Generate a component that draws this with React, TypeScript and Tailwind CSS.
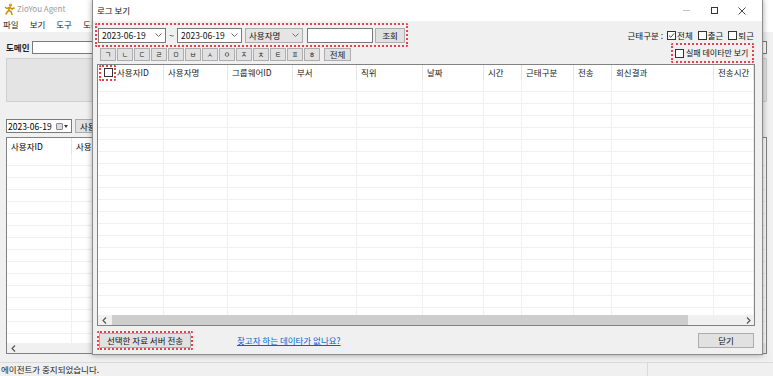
import type { ReactNode } from 'react'

const consonants = ['ㄱ', 'ㄴ', 'ㄷ', 'ㄹ', 'ㅁ', 'ㅂ', 'ㅅ', 'ㅇ', 'ㅈ', 'ㅊ', 'ㅌ', 'ㅍ', 'ㅎ']

const columns = [
  { label: '사용자명', w: 'w-[64px]' },
  { label: '그룹웨어ID', w: 'w-[65px]' },
  { label: '부서', w: 'w-[64px]' },
  { label: '직위', w: 'w-[66px]' },
  { label: '날짜', w: 'w-[61px]' },
  { label: '시간', w: 'w-[38px]' },
  { label: '근태구분', w: 'w-[52px]' },
  { label: '전송', w: 'w-[38px]' },
  { label: '회신결과', w: 'w-[102px]' },
  { label: '전송시간', w: 'w-[40px]' },
]

const rows = Array.from({ length: 20 }, (_, i) => i)

function Chevron() {
  return (
    <svg width="7" height="4" viewBox="0 0 7 4">
      <path d="M0.5 0.5L3.5 3.5L6.5 0.5" stroke="#606060" fill="none" strokeWidth="0.9" />
    </svg>
  )
}

function Combo({ text, className }: { text: string; className: string }) {
  return (
    <div className={`flex h-[15px] items-center justify-between border pl-[3px] pr-[3px] ${className}`}>
      <span className="leading-none">{text}</span>
      <Chevron />
    </div>
  )
}

function Box({ checked }: { checked?: boolean }) {
  return (
    <span className="flex h-[9px] w-[9px] shrink-0 items-center justify-center border border-[#333] bg-white">
      {checked && (
        <svg width="7" height="7" viewBox="0 0 7 7">
          <path d="M1 3.6L2.8 5.3L6 1.5" stroke="#333" fill="none" strokeWidth="0.9" />
        </svg>
      )}
    </span>
  )
}

function Btn({ children, className }: { children: ReactNode; className: string }) {
  return (
    <div className={`flex items-center justify-center border border-[#adadad] bg-[#e1e1e1] leading-none ${className}`}>
      {children}
    </div>
  )
}

function Arrow({ dir }: { dir: 'left' | 'right' }) {
  return (
    <svg width="5" height="7" viewBox="0 0 5 7">
      <path
        d={dir === 'left' ? 'M4 0.5L1 3.5L4 6.5' : 'M1 0.5L4 3.5L1 6.5'}
        stroke="#505050"
        fill="none"
        strokeWidth="1.1"
      />
    </svg>
  )
}

function AgentIcon() {
  return (
    <svg width="11" height="12" viewBox="0 0 11 12">
      <circle cx="6.5" cy="2" r="1.6" fill="#d9a000" />
      <path
        d="M6 4L4.5 7.5L2 11M4.5 7.5L7 8.5L8 11.5M5.5 4.5L3 5.5L1.5 4.5M6 4.5L8 6L10 5"
        stroke="#c88f00"
        strokeWidth="1.5"
        fill="none"
        strokeLinecap="round"
      />
    </svg>
  )
}

function BackgroundApp() {
  return (
    <div className="flex h-[376px] w-[773px] flex-col bg-[#f0f0f0]">
      <div className="flex h-[17px] items-center gap-[2px] bg-white pl-[4px] text-[8px] text-[#9a9a9a]">
        <AgentIcon />
        <span>ZioYou Agent</span>
      </div>
      <div className="flex h-[15px] items-center gap-[11px] bg-white pl-[3px] text-[8.5px] text-[#222]">
        <span>파일</span>
        <span>보기</span>
        <span>도구</span>
        <span>도움말</span>
      </div>
      <div className="flex flex-1 flex-col px-[6px]">
        <div className="mt-[9px] flex h-[13px] items-center">
          <span className="w-[26px] text-[8.5px] font-bold text-[#222]">도메인</span>
          <div className="h-[13px] flex-1 border border-[#7a7a7a] bg-white" />
        </div>
        <div className="mt-[4px] h-[44px] border border-[#cfcfcf] bg-[#e4e4e4]" />
        <div className="mt-[17px] flex h-[14px] items-center gap-[3px]">
          <div className="flex h-[14px] w-[66px] items-center justify-between border border-[#7a7a7a] bg-white pl-[1px] pr-[3px] text-[8.5px]">
            <span className="leading-none">2023-06-19</span>
            <span className="flex items-center gap-[1px]">
              <span className="h-[7px] w-[7px] rounded-[1px] border border-[#8a8a8a] bg-[#dcdcdc]" />
              <svg width="4" height="3" viewBox="0 0 4 3">
                <path d="M0 0H4L2 3Z" fill="#3a3a3a" />
              </svg>
            </span>
          </div>
          <Btn className="h-[14px] w-[40px] justify-start pl-[4px] text-[8.5px]">사용자</Btn>
        </div>
        <div className="mt-[4px] flex h-[217px] flex-col overflow-hidden border border-[#828282] bg-white">
          <div className="flex h-[16px] shrink-0 text-[8.5px]">
            <div className="flex w-[65px] items-center border-r border-[#e5e5e5] pl-[4px]">사용자ID</div>
            <div className="flex items-center pl-[4px]">사용자명</div>
          </div>
          <div className="flex-1 overflow-hidden">
            {rows.map((r) => (
              <div key={r} className="flex h-[12px] border-b border-[#f0f0f0]">
                <div className="w-[65px] border-r border-[#f0f0f0]" />
              </div>
            ))}
          </div>
          <div className="flex h-[10px] shrink-0 items-center bg-[#f0f0f0] pl-[4px]">
            <Arrow dir="left" />
          </div>
        </div>
      </div>
      <div className="mt-[5px] flex h-[14px] items-center border-t border-[#dadada] text-[8.5px] text-[#222]">
        <span className="w-[648px] border-r border-[#dadada] pl-[1px]">에이전트가 중지되었습니다.</span>
      </div>
    </div>
  )
}

function LogDialog() {
  return (
    <div className="absolute left-[92px] top-[-1px] flex h-[356px] w-[671px] flex-col border border-[#8c8c8c] bg-[#f0f0f0] text-[8.5px] shadow-[0_0_6px_rgba(0,0,0,0.35)]">
      <div className="flex h-[21px] shrink-0 items-center justify-between bg-white">
        <span className="pl-[4px] text-[#111]">로그 보기</span>
        <div className="flex h-full items-center">
          <div className="flex w-[28px] items-center justify-center">
            <span className="h-px w-[7px] bg-[#c4c4c4]" />
          </div>
          <div className="flex w-[28px] items-center justify-center">
            <span className="h-[7px] w-[7px] border border-[#333]" />
          </div>
          <div className="mr-[6px] flex w-[28px] items-center justify-center">
            <svg width="8" height="8" viewBox="0 0 8 8">
              <path d="M0.5 0.5L7.5 7.5M7.5 0.5L0.5 7.5" stroke="#333" strokeWidth="0.9" />
            </svg>
          </div>
        </div>
      </div>

      <div className="flex h-[43px] shrink-0 justify-between">
        <div className="flex flex-col">
          <div className="ml-[2px] mt-[2px] flex h-[24px] w-[313px] items-center rounded-[2px] border-2 border-dotted border-[#e8404f] pl-[1px] text-[#111]">
            <Combo text="2023-06-19" className="w-[68px] border-[#7a7a7a] bg-white" />
            <span className="w-[11px] text-center leading-none">~</span>
            <Combo text="2023-06-19" className="w-[65px] border-[#7a7a7a] bg-white" />
            <Combo text="사용자명" className="ml-[3px] w-[58px] border-[#adadad] bg-[#e5e5e5]" />
            <div className="ml-[4px] h-[15px] w-[66px] border border-[#7a7a7a] bg-white" />
            <Btn className="ml-[2px] h-[15px] w-[30px]">조회</Btn>
          </div>
          <div className="ml-[7px] mt-[1px] flex h-[13px] items-center gap-[1px] text-[7px] text-[#222]">
            {consonants.map((c) => (
              <Btn key={c} className="h-[13px] w-[16px]">
                {c}
              </Btn>
            ))}
            <Btn className="ml-[3px] h-[13px] w-[27px] text-[8.5px]">전체</Btn>
          </div>
        </div>
        <div className="mr-[8px] flex w-[130px] flex-col items-end text-[#111]">
          <div className="mt-[9px] flex h-[10px] items-center whitespace-nowrap">
            <span className="mr-[4px]">근태구분 :</span>
            <Box checked />
            <span className="ml-[1px] mr-[5px]">전체</span>
            <Box />
            <span className="ml-[1px] mr-[5px]">출근</span>
            <Box />
            <span className="ml-[1px]">퇴근</span>
          </div>
          <div className="mt-[3px] flex h-[20px] w-[83px] items-center gap-[2px] overflow-hidden rounded-[2px] border-2 border-dotted border-[#e8404f] pl-[2px] text-[8px]">
            <Box />
            <span className="whitespace-nowrap">실패 데이타만 보기</span>
          </div>
        </div>
      </div>

      <div className="ml-[4px] mr-[7px] flex h-[262px] shrink-0 flex-col overflow-hidden border border-[#828282] bg-white text-[#222]">
        <div className="flex h-[15px] shrink-0">
          <div className="relative flex w-[66px] items-center border-r border-[#e5e5e5] pl-[6px]">
            <Box />
            <span className="ml-[4px]">사용자ID</span>
            <span className="absolute left-[1px] top-0 h-[16px] w-[17px] rounded-[2px] border-2 border-dotted border-[#e8404f]" />
          </div>
          {columns.map((c) => (
            <div key={c.label} className={`flex items-center whitespace-nowrap border-r border-[#e5e5e5] pl-[4px] ${c.w}`}>
              {c.label}
            </div>
          ))}
        </div>
        <div className="flex-1 overflow-hidden">
          {rows.map((r) => (
            <div key={r} className="flex h-[12px] border-b border-[#f0f0f0]">
              <div className="w-[66px] border-r border-[#f0f0f0]" />
              {columns.map((c) => (
                <div key={c.label} className={`border-r border-[#f0f0f0] ${c.w}`} />
              ))}
            </div>
          ))}
        </div>
        <div className="flex h-[10px] shrink-0 items-center bg-[#f0f0f0]">
          <div className="flex w-[12px] justify-center">
            <Arrow dir="left" />
          </div>
          <div className="ml-[2px] h-[10px] w-[576px] bg-[#cdcdcd]" />
          <div className="flex flex-1 justify-end pr-[3px]">
            <Arrow dir="right" />
          </div>
        </div>
      </div>

      <div className="flex h-[28px] shrink-0 items-center justify-between text-[#111]">
        <div className="flex items-center">
          <div className="ml-[4px] rounded-[2px] border-2 border-dotted border-[#e8404f]">
            <Btn className="h-[15px] w-[92px] whitespace-nowrap">선택한 자료 서버 전송</Btn>
          </div>
          <a className="ml-[44px] text-[#0066cc] underline">찾고자 하는 데이타가 없나요?</a>
        </div>
        <Btn className="mr-[8px] h-[15px] w-[56px]">닫기</Btn>
      </div>
    </div>
  )
}

export default function App() {
  return (
    <div className="relative h-[376px] w-[773px] overflow-hidden font-['Noto_Sans_CJK_KR',sans-serif]">
      <BackgroundApp />
      <LogDialog />
    </div>
  )
}
